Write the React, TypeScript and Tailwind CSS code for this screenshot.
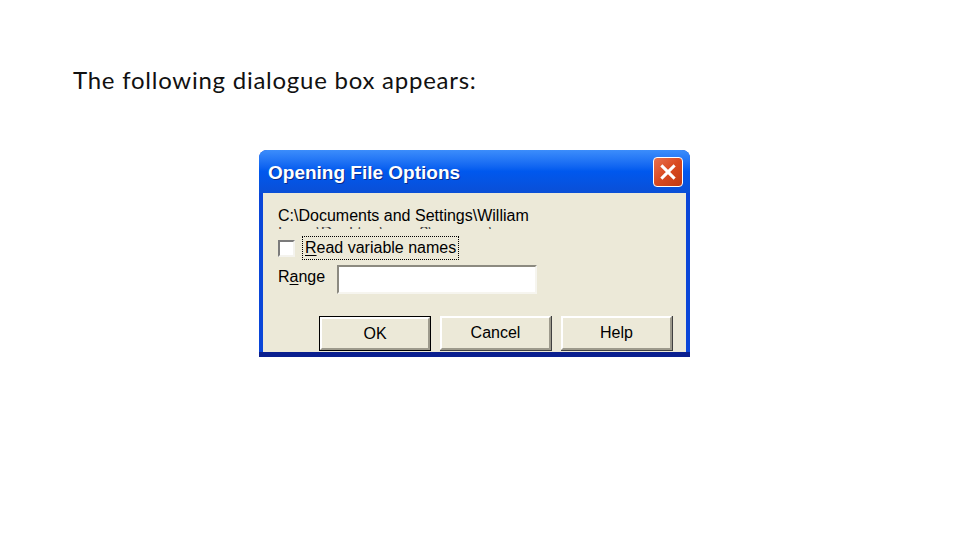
import React from 'react';

function CloseIcon() {
  return (
    <svg viewBox="0 0 30 30" className="w-[30px] h-[30px]">
      <path d="M9 9 L21 21 M21 9 L9 21" stroke="#ffffff" strokeWidth="3.2" strokeLinecap="square" />
    </svg>
  );
}

function XpButton({ label, isDefault }: { label: string; isDefault?: boolean }) {
  return (
    <div
      className={
        'w-[112px] h-[35px] ' +
        (isDefault ? 'border border-black' : 'border-r border-b border-[#404040]')
      }
    >
      <div className="w-full h-full border-t-2 border-l-2 border-white border-r-2 border-b-2 border-r-[#9d9a8c] border-b-[#9d9a8c] flex items-center justify-center text-[16px] text-black">
        {label}
      </div>
    </div>
  );
}

export default function App() {
  return (
    <div className="w-[960px] h-[540px] bg-white overflow-hidden font-['Liberation_Sans',Arial,sans-serif]">
      <p className="pl-[73px] pt-[64px] text-[24px] leading-[32px] tracking-[0.75px] text-[#111] font-['Lato',sans-serif]">
        The following dialogue box appears:
      </p>

      <div className="ml-[259px] mt-[54px] w-[431px] rounded-t-[8px] overflow-hidden bg-[#0a46d8] border-b-[5px] border-[#0a1f8f]">
        {/* title bar */}
        <div className="h-[43px] flex items-center justify-between pl-[9px] pr-[7px] bg-gradient-to-b from-[#3c8dfb] via-[#0058ee] to-[#0a4fd6]">
          <span className="mt-[3px] text-white font-bold text-[19px] [text-shadow:1px_1px_0_#0a2a8a]">
            Opening File Options
          </span>
          <div className="w-[30px] h-[30px] rounded-[4px] border border-white bg-gradient-to-br from-[#e8704c] via-[#d9491f] to-[#c13a14] flex items-center justify-center">
            <CloseIcon />
          </div>
        </div>

        {/* body */}
        <div className="mx-[4px] h-[159px] bg-[#ece9d8] flex flex-col pl-[15px] pr-[13px] text-black text-[16px]">
          <div className="mt-[13px] h-[20px] leading-[20px] whitespace-nowrap">C:\Documents and Settings\William</div>
          <div className="mt-[1px] h-[2px] overflow-hidden leading-[20px] whitespace-nowrap text-[#444]">
            <div className="-mt-[4px]">Lowe\Desktop\year 3\courses\surveys.sav</div>
          </div>

          <div className="mt-[7px] h-[24px] flex items-center">
            <div className="w-[17px] h-[17px] bg-white border-2 border-t-[#7b7b7b] border-l-[#7b7b7b] border-r-[#f4f3ee] border-b-[#f4f3ee]" />
            <div className="ml-[7px] h-[24px] px-[2px] flex items-center border border-dotted border-black">
              <span>
                <span className="underline underline-offset-2">R</span>ead variable names
              </span>
            </div>
          </div>

          <div className="mt-[5px] flex items-start">
            <span className="mt-[2px] w-[59px] leading-[20px]">
              R<span className="underline underline-offset-2">a</span>nge
            </span>
            <div className="w-[200px] h-[29px] bg-white border-2 border-t-[#8c8a80] border-l-[#8c8a80] border-r-[#f6f5ef] border-b-[#f6f5ef]" />
          </div>

          <div className="mt-[22px] flex justify-end gap-[9px]">
            <XpButton label="OK" isDefault />
            <XpButton label="Cancel" />
            <XpButton label="Help" />
          </div>
        </div>
      </div>
    </div>
  );
}
